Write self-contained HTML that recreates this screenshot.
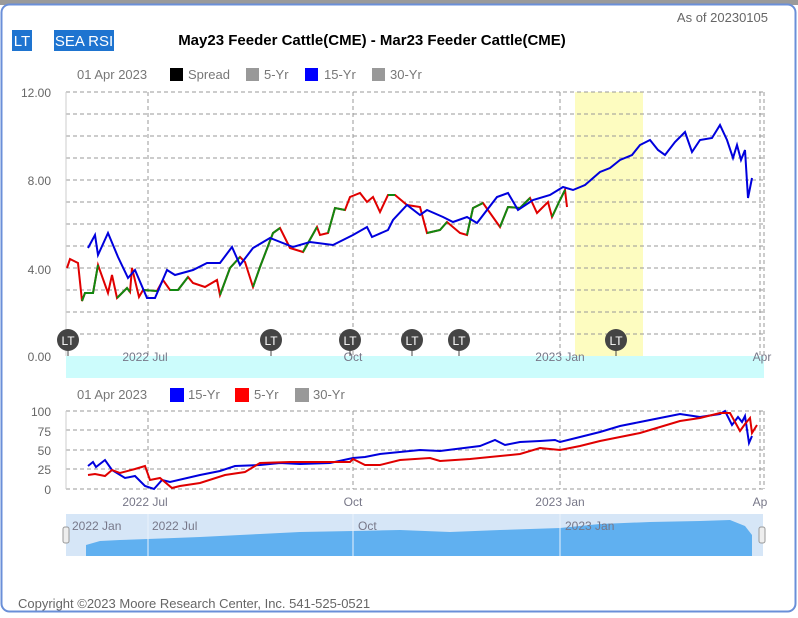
<!DOCTYPE html>
<html><head><meta charset="utf-8"><style>
body{margin:0;width:798px;height:613px;overflow:hidden;background:#fff;font-family:"Liberation Sans",sans-serif}
</style></head><body>
<svg width="798" height="613" xmlns="http://www.w3.org/2000/svg" font-family="Liberation Sans, sans-serif">
<rect x="0" y="0" width="798" height="613" fill="#fff"/>
<rect x="0" y="0" width="798" height="5" fill="#9a9a9a"/>
<rect x="1.5" y="4.5" width="794" height="607" rx="8" fill="#fff" stroke="#6a8fd8" stroke-width="2"/>
<text x="768" y="22" font-size="13" fill="#666" text-anchor="end">As of 20230105</text>
<rect x="12" y="30" width="20" height="21" fill="#1e74d0"/><text x="22" y="46" font-size="15" fill="#fff" text-anchor="middle">LT</text>
<rect x="54" y="30" width="60" height="21" fill="#1e74d0"/><text x="84" y="46" font-size="15" fill="#fff" text-anchor="middle">SEA RSI</text>
<text x="372" y="45" font-size="15" font-weight="bold" fill="#000" text-anchor="middle">May23 Feeder Cattle(CME) - Mar23 Feeder Cattle(CME)</text>
<g font-size="13" fill="#777">
<text x="77" y="79">01 Apr 2023</text>
<rect x="170" y="68" width="13" height="13" fill="#000"/><text x="188" y="79">Spread</text>
<rect x="246" y="68" width="13" height="13" fill="#999"/><text x="264" y="79">5-Yr</text>
<rect x="305" y="68" width="13" height="13" fill="#00f"/><text x="324" y="79">15-Yr</text>
<rect x="372" y="68" width="13" height="13" fill="#999"/><text x="390" y="79">30-Yr</text>
</g>
<rect x="575" y="92" width="68" height="264" fill="#fdfcc0"/>
<rect x="66" y="356" width="698" height="22" fill="#ccfcfc"/>
<g stroke="#999" stroke-dasharray="4,3" fill="none">
<path d="M66 92H764M66 114H764M66 136H764M66 158H764M66 180H764M66 202H764M66 224H764M66 246H764M66 268H764M66 290H764M66 312H764M66 334H764"/>
<path d="M148 92V356M353 92V356M560 92V356M760 92V356M764 92V356"/>
<path d="M66 411H764M66 430H764M66 450H764M66 469H764M66 489H764M148 411V489M353 411V489M560 411V489M760 411V489M764 411V489"/>
</g>
<path d="M66 92V356M66 411V489" stroke="#ccc"/>
<g font-size="12" fill="#666" text-anchor="end">
<text x="51" y="97">12.00</text><text x="51" y="185">8.00</text><text x="51" y="274">4.00</text><text x="51" y="361">0.00</text>
<text x="51" y="416">100</text><text x="51" y="436">75</text><text x="51" y="455">50</text><text x="51" y="474">25</text><text x="51" y="494">0</text>
</g>
<g font-size="12" fill="#778" text-anchor="middle">
<text x="145" y="361">2022 Jul</text><text x="353" y="361">Oct</text><text x="560" y="361">2023 Jan</text><text x="762" y="361">Apr</text>
<text x="145" y="506">2022 Jul</text><text x="353" y="506">Oct</text><text x="560" y="506">2023 Jan</text><text x="760" y="506">Ap</text>
</g>
<polyline fill="none" stroke-width="2" stroke="#e00000" points="67,268 70,259 78,263 82,301 85,293 93,293 98,265 108,293 112,275 117,298 127,288 130,292 132,268 139,297 143,290 157,291 163,280 170,290 178,290 188,277 193,283 205,287 217,280 220,295 230,268 240,257 245,262 253,287 260,267 273,233 280,228 290,248 303,252 317,227 320,235 328,233 335,208 345,210 350,197 360,193 367,202 373,197 380,212 388,195 395,195 407,205 420,207 427,233 440,230 447,222 460,233 467,235 473,208 483,203 500,227 508,207 520,208 530,198 537,213 548,202 552,217 560,200 565,190 567,207"/>
<g fill="none" stroke-width="2" stroke="#118811">
<polyline points="82,301 85,293 93,293 98,265"/><polyline points="117,298 127,288 130,292"/><polyline points="143,290 157,291"/><polyline points="170,290 178,290 188,277"/><polyline points="220,295 230,268 240,257"/><polyline points="253,287 260,267 273,233 280,228"/><polyline points="303,252 317,227"/><polyline points="328,233 335,208 345,210"/><polyline points="388,195 395,195"/><polyline points="427,233 440,230 447,222"/><polyline points="467,235 473,208 483,203"/><polyline points="500,227 508,207 520,208 530,198"/><polyline points="552,217 560,200 565,190"/>
</g>
<polyline fill="none" stroke-width="2" stroke="#0000dd" points="88,248 95,235 98,255 108,233 118,257 128,278 135,270 147,298 155,298 167,270 175,275 193,270 207,263 220,263 232,247 240,265 253,248 270,238 293,247 310,242 333,245 353,235 367,227 372,237 388,230 393,220 407,205 420,215 427,210 443,217 453,222 467,217 477,223 497,197 508,193 518,210 533,200 550,195 563,187 573,190 585,185 600,172 610,168 620,160 632,155 640,145 650,140 658,150 665,155 675,142 685,132 692,152 700,140 712,138 720,125 727,140 733,158 737,145 741,160 745,150 748,198 752,178"/>
<g font-size="12" fill="#fff" text-anchor="middle">
<g stroke="#444"><path d="M68 340V356M271 340V356M350 340V356M412 340V356M459 340V356M616 340V356"/></g>
<circle cx="68" cy="340" r="11" fill="#444"/><text x="68" y="345">LT</text>
<circle cx="271" cy="340" r="11" fill="#444"/><text x="271" y="345">LT</text>
<circle cx="350" cy="340" r="11" fill="#444"/><text x="350" y="345">LT</text>
<circle cx="412" cy="340" r="11" fill="#444"/><text x="412" y="345">LT</text>
<circle cx="459" cy="340" r="11" fill="#444"/><text x="459" y="345">LT</text>
<circle cx="616" cy="340" r="11" fill="#444"/><text x="616" y="345">LT</text>
</g>
<g font-size="13" fill="#777">
<text x="77" y="399">01 Apr 2023</text>
<rect x="170" y="388" width="14" height="14" fill="#00f"/><text x="188" y="399">15-Yr</text>
<rect x="235" y="388" width="14" height="14" fill="#f00"/><text x="254" y="399">5-Yr</text>
<rect x="295" y="388" width="14" height="14" fill="#999"/><text x="313" y="399">30-Yr</text>
</g>
<polyline fill="none" stroke-width="2" stroke="#0000dd" points="88,466 93,462 96,467 105,460 112,470 125,478 135,476 145,486 154,489 162,480 170,482 200,475 220,471 235,466 260,465 280,463 300,464 330,463 353,458 365,457 380,454 420,450 440,451 480,446 495,440 505,445 520,442 540,441 555,440 560,442 580,437 600,432 620,426 640,422 660,418 680,414 700,417 720,414 725,411 732,425 738,417 742,422 745,416 749,443 752,436"/>
<polyline fill="none" stroke-width="2" stroke="#e00000" points="88,475 95,474 105,476 112,470 120,473 135,469 145,466 150,480 160,478 172,488 180,486 200,483 225,475 245,472 260,463 290,462 320,462 350,462 353,459 365,465 380,465 400,460 430,458 440,461 470,459 490,457 520,454 540,448 560,450 580,446 600,441 620,437 640,433 660,427 680,421 700,418 720,413 730,413 740,431 745,424 750,418 752,433 757,425"/>
<rect x="66" y="514" width="697" height="42" fill="#d6e6f7"/>
<path d="M86 556V545L100 541 120 540 148 539 200 537 260 534 300 532 353 531 400 530 450 532 500 530 560 528 600 524 650 522 700 521 730 520 745 526 752 535V556Z" fill="#60b0f0"/>
<path d="M148 514V556M353 514V556M560 514V556" stroke="#eaf2fb"/>
<g font-size="12" fill="#778"><text x="72" y="530">2022 Jan</text><text x="152" y="530">2022 Jul</text><text x="358" y="530">Oct</text><text x="565" y="530">2023 Jan</text></g>
<rect x="63" y="527" width="6" height="16" rx="2" fill="#eee" stroke="#999"/>
<rect x="759" y="527" width="6" height="16" rx="2" fill="#eee" stroke="#999"/>
<text x="18" y="608" font-size="13" fill="#666">Copyright ©2023 Moore Research Center, Inc. 541-525-0521</text>
</svg>
</body></html>
